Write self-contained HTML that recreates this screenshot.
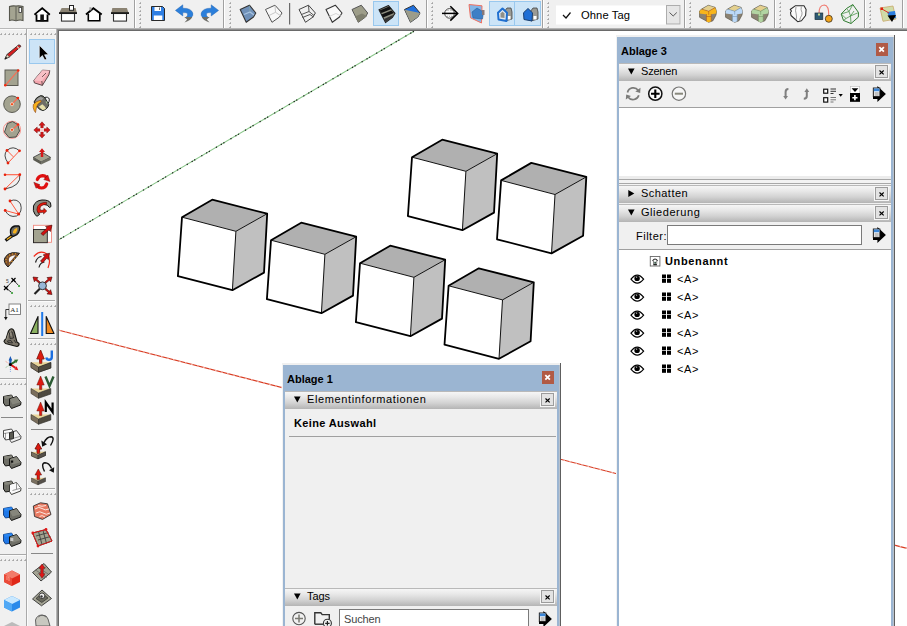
<!DOCTYPE html>
<html><head><meta charset="utf-8">
<style>
*{margin:0;padding:0;box-sizing:border-box}
html,body{width:907px;height:626px;overflow:hidden;background:#f0f0f0;font-family:"Liberation Sans",sans-serif;font-size:11px;color:#000}
.a{position:absolute}
svg{position:absolute;overflow:visible}
.panel{position:absolute;background:#9db5d1;border-left:1px solid #e6e6e6;border-top:1px solid #e6e6e6;}
.ttl{position:absolute;font-weight:bold;font-size:11px;white-space:nowrap}
.hdr{position:absolute;height:17px;background:linear-gradient(#f5f5f5,#e3e3e3 40%,#bcbcbc);border-top:1px solid #c8c8c8}
.hdr .t{position:absolute;left:22px;top:2px;font-size:11px;white-space:nowrap;color:#1a1a1a}
.hx{position:absolute;width:14px;height:14px;border:1px solid #adadad;background:#e8e8e8}
.cx{position:absolute;width:12px;height:13px;background:#b4574a}
.body{position:absolute;background:#f0f0f0}
.tx{white-space:nowrap;line-height:13px}
</style></head><body>

<!-- TOP TOOLBAR -->
<svg width="907" height="28" style="left:0;top:0">
  <defs>
    <g id="grip"><rect x="0" y="0" width="2" height="2" fill="#b8b8b8"/><rect x="0" y="0" width="1" height="1" fill="#f4f4f4"/><rect x="1" y="1" width="1" height="1" fill="#a4a4a4"/></g>
    <g id="gripcol">
      <use href="#grip" y="2"/><use href="#grip" y="6"/><use href="#grip" y="10"/><use href="#grip" y="14"/><use href="#grip" y="18"/><use href="#grip" y="22"/><use href="#grip" y="26"/>
    </g>
    <g id="sep"><rect x="0" y="0" width="1" height="28" fill="#a0a0a0"/><rect x="1" y="0" width="1" height="28" fill="#fff"/></g>
  </defs>
  <use href="#sep" x="134"/><use href="#gripcol" x="139"/>
  <use href="#sep" x="223"/><use href="#gripcol" x="229"/>
  <use href="#sep" x="426"/><use href="#gripcol" x="431"/>
  <use href="#sep" x="542"/><use href="#gripcol" x="547"/>
  <use href="#sep" x="684"/><use href="#gripcol" x="689"/>
  <use href="#sep" x="774"/><use href="#gripcol" x="779"/>
  <use href="#sep" x="864"/><use href="#gripcol" x="869"/>
  <use href="#sep" x="902"/>
  <rect x="289" y="3" width="1.2" height="21.5" fill="#6a6a6a"/>

  <!-- book -->
  <path d="M9.5,6.5 Q12,5.5 16,6 Q20,5.5 23,6.5 L23,20.5 Q20,19.5 16,20.8 Q12,19.5 9.5,20.5 Z" fill="#a4a491" stroke="#55554c" stroke-width="1.1"/>
  <line x1="16" y1="6" x2="16" y2="20.8" stroke="#66665c" stroke-width="1.1"/>
  <rect x="19" y="7.5" width="2.5" height="5" fill="#fff" stroke="#333" stroke-width="0.8"/>
  <!-- home -->
  <path d="M36.5,14.5 V20.8 H47.5 V14.5" fill="#fff" stroke="#000" stroke-width="1.8"/>
  <path d="M34.5,14.8 L42.2,8.3 L49.8,14.8" fill="none" stroke="#000" stroke-width="2"/>
  <path d="M36.5,14 L42.2,9.5 L47.5,14 Z" fill="#fff"/>
  <rect x="40.3" y="14.5" width="3.6" height="6.8" fill="#111"/>
  <!-- house chimney -->
  <rect x="61.5" y="13.5" width="13" height="7.6" fill="#fff" stroke="#333" stroke-width="1.1"/>
  <path d="M61.6,8 H75.6 L76.9,13 H59.2 Z" fill="#8b8373"/>
  <rect x="59" y="12.2" width="18" height="1.8" fill="#1a1a1a"/>
  <rect x="69.5" y="5.5" width="4" height="4.8" fill="#fff" stroke="#222" stroke-width="1"/>
  <!-- house outline -->
  <path d="M88.3,14 V20.8 H99.8 V14" fill="#fff" stroke="#000" stroke-width="1.6"/>
  <path d="M88.5,14 L93.4,9.5 L99.5,14 Z" fill="#fff"/>
  <path d="M86,14.5 L93.4,8.3 L101.7,14.5" fill="none" stroke="#000" stroke-width="1.9"/>
  <rect x="89.4" y="7.2" width="2" height="3.2" fill="#aaa"/>
  <!-- house gray roof -->
  <rect x="113.5" y="13.5" width="13" height="7.6" fill="#fff" stroke="#333" stroke-width="1.1"/>
  <path d="M112.3,8 H126.9 L128.6,13 H111.3 Z" fill="#8b8373"/>
  <rect x="111" y="12.2" width="18" height="1.8" fill="#1a1a1a"/>
  <!-- save -->
  <path d="M151.5,6.5 H162.5 L164.5,8.5 V20.5 H151.5 Z" fill="#2f7fe3" stroke="#2a2a2a" stroke-width="1"/>
  <rect x="154.5" y="7" width="6.5" height="4" fill="#fff"/>
  <rect x="159" y="7.5" width="1" height="2.5" fill="#777"/>
  <rect x="153.8" y="15.5" width="8.5" height="4.5" fill="#fff"/>
  <!-- undo -->
  <path d="M175.4,10.4 L182.8,4.8 L182.8,8.2 Q191,8 192.8,13 Q193.4,16.2 191,17.6 L186,17.4 Q188.4,15.2 187.5,13.6 Q186.5,12.3 182.8,12.6 L182.8,16 Z" fill="#2b7fdb" stroke="#1a5aa8" stroke-width="0.4"/>
  <path d="M184.3,16.9 L192.2,17 Q191.2,20.2 184.5,22.4 L187.2,19.6 Z" fill="#6e6e68"/>
  <!-- redo -->
  <g transform="translate(394,0) scale(-1,1)">
  <path d="M175.4,10.4 L182.8,4.8 L182.8,8.2 Q191,8 192.8,13 Q193.4,16.2 191,17.6 L186,17.4 Q188.4,15.2 187.5,13.6 Q186.5,12.3 182.8,12.6 L182.8,16 Z" fill="#2b7fdb" stroke="#1a5aa8" stroke-width="0.4"/>
  <path d="M184.3,16.9 L192.2,17 Q191.2,20.2 184.5,22.4 L187.2,19.6 Z" fill="#6e6e68"/>
  </g>
  <!-- xray cube -->
  <path d="M240.2,9.5 L249.4,5.2 L255.8,13 L253.5,17 L246.2,22.3 Z" fill="#6f90b8" stroke="#333" stroke-width="1.1" stroke-linejoin="round"/>
  <path d="M244,14.5 L250,12 L254,15" fill="none" stroke="#a8c4e2" stroke-width="1.2"/>
  <line x1="249.4" y1="5.5" x2="250" y2="12" stroke="#8aa" stroke-width="0.6"/>
  <!-- back edges -->
  <path d="M265.5,9.5 L275,5.2 L282,13 L279.5,17 L272,22.3 Z" fill="#f8f8f8" stroke="#555" stroke-width="1" stroke-linejoin="round"/>
  <path d="M269,15.5 L275.5,12.3 L281,16 M275,5.5 L275.5,12.3" fill="none" stroke="#bbb" stroke-width="0.8"/>
  <!-- wireframe -->
  <path d="M299,9.5 L308.5,5.2 L315.4,13 L313,17 L305.5,22.3 Z" fill="none" stroke="#444" stroke-width="1" stroke-linejoin="round"/>
  <path d="M301.5,14.5 L309,11.5 L314,15.5 M308.5,5.5 L309,11.5 M302.5,17.5 L310,14.5 L313.5,17" fill="none" stroke="#444" stroke-width="0.9"/>
  <!-- hidden line -->
  <path d="M326,9.5 L335.3,5.2 L342,13 L339.5,17 L332.3,22.3 Z" fill="#fafafa" stroke="#333" stroke-width="1.1" stroke-linejoin="round"/>
  <path d="M329,16.5 L336,13.5 L341,16" fill="none" stroke="#ccc" stroke-width="0.8"/>
  <!-- shaded -->
  <path d="M352,9.5 L361.3,5.2 L367.7,13 L365.5,17 L358.3,22.3 Z" fill="#9d9d89" stroke="#555" stroke-width="1" stroke-linejoin="round"/>
  <path d="M355,16.5 L362,13.5 L367,16 L358.3,22.3 Z" fill="#7f7f6e"/>
  <!-- selected textured -->
  <rect x="373.5" y="1.5" width="25" height="24" fill="#cce4f7" stroke="#99c8ee" stroke-width="1"/>
  <path d="M379,9.8 L388.5,5.5 L395,13.3 L392.5,17.3 L385.5,22.6 Z" fill="#8e8e80" stroke="#222" stroke-width="1.1" stroke-linejoin="round"/>
  <path d="M379.5,10.5 L389,6.5 L391.5,9 L381.5,13 Z" fill="#111"/>
  <path d="M381.5,14.5 L391.5,10.5 L394,13 L383,17.5 Z" fill="#111"/>
  <path d="M384,19 L393,15 L392.5,17.3 L385.5,22 Z" fill="#333"/>
  <!-- monochrome -->
  <path d="M404.5,9.5 L413.5,5.2 L420,13 L417.8,17 L410.5,22.3 Z" fill="#1f6fdc" stroke="#333" stroke-width="1" stroke-linejoin="round"/>
  <path d="M404.8,9.8 L420,13 L417.8,17 L410.5,22.3 Z" fill="#9c9c8a"/>
  <!-- axes -->
  <circle cx="449.5" cy="13.4" r="4.8" fill="#fbfbfb" stroke="#333" stroke-width="0.9"/>
  <path d="M447.5,10.5 h1 M450.5,10.5 h1 M447,16.3 h1 M449,16.3 h1 M451,16.3 h1" stroke="#888" stroke-width="0.8"/>
  <line x1="442" y1="13.4" x2="457" y2="13.4" stroke="#000" stroke-width="1.5"/>
  <path d="M450.3,6.2 L457.7,13.4 L450.3,20.6" fill="none" stroke="#000" stroke-width="1.5"/>
  <!-- section plane -->
  <path d="M469,4.5 L482,5.8 L481.5,23 L470.5,17.8 Z" fill="#82b6e8" stroke="#f07060" stroke-width="1"/>
  <path d="M472,12 L477,8 L483.5,12 L482.5,19 L473,18 Z" fill="#3d7fc6" stroke="#2a5e99" stroke-width="0.6"/>
  <rect x="482" y="10" width="2.5" height="5" fill="#877"/>
  <!-- selected house btns -->
  <rect x="489.5" y="1.5" width="25" height="24" fill="#cce4f7" stroke="#99c8ee" stroke-width="1"/>
  <rect x="514.5" y="1.5" width="26" height="24" fill="#cce4f7" stroke="#99c8ee" stroke-width="1"/>
  <path d="M504,12 L507,8 L511,8 L512,12 L512,19 L505,21 Z" fill="#9a9a94" stroke="#444" stroke-width="0.8"/>
  <rect x="507.5" y="16" width="3" height="3.5" fill="#fff"/>
  <path d="M498,12.8 L502.5,8.5 L507,12.8 L506.5,21 L498.5,19.5 Z" fill="#dfe9f3" stroke="#1f6fd0" stroke-width="2" stroke-linejoin="round"/>
  <path d="M500.5,13.5 L502.5,11.5 L504.5,13.5 L504.5,18 L500.5,17.5 Z" fill="#8f8f88"/>
  <path d="M530,12 L533,8 L537,8 L538,12 L538,19 L531,21 Z" fill="#9a9a94" stroke="#444" stroke-width="0.8"/>
  <rect x="533.5" y="16" width="3" height="3.5" fill="#fff"/>
  <path d="M523.5,12.8 L528,8.5 L532.5,12.8 L532,21 L524,19.5 Z" fill="#1f6fd6" stroke="#1a3f70" stroke-width="1" stroke-linejoin="round"/>
  <!-- dropdown -->
  <rect x="556" y="5.5" width="125" height="19" fill="#fff"/>
  <path d="M563,15 L566,18 L570.5,12.5" fill="none" stroke="#111" stroke-width="1.25"/>
  <text x="581" y="18.6" font-family="Liberation Sans" font-size="11.2" fill="#000" letter-spacing="0.1">Ohne Tag</text>
  <rect x="666.5" y="5.5" width="13.5" height="18.5" fill="#e6e6e6" stroke="#adadad" stroke-width="1"/>
  <path d="M669.5,12.5 L673.2,16 L676.8,12.5" fill="none" stroke="#555" stroke-width="1"/>
  <!-- solids -->
<g transform="translate(0,0)">
    <path d="M699.5,11 L701.8,8.9 L708.3,5.3 L715.2,7.4 L716.5,11.6 L716,15 L712.9,20.8 L708.7,22.3 L699.6,17.3 Z" fill="#8b8272" stroke="#5a5448" stroke-width="0.7" stroke-linejoin="round"/>
    <path d="M702,9.2 L708.3,5.5 L715,7.6 L708.7,11.2 Z" fill="#e4d08e"/>
    <path d="M699.6,10.8 L702,9.2 L708.7,11.2 L708.7,14.8 L699.6,13.4 Z" fill="#f8b51a"/>
    <path d="M708.7,11.2 L715,7.6 L716.5,11.3 L716.2,13.6 L708.7,14.8 Z" fill="#f8b51a"/>
    <path d="M706.4,12 L711.2,12 L711.2,21.2 L708.7,22.2 L706.4,21.4 Z" fill="#f8b51a"/>
    <path d="M702,9.2 L708.7,11.2 L715,7.6 M708.7,11.2 V14.8 M706.4,14 V21.4 M711.2,14 V21.2 M706.4,16.5 H711.2" fill="none" stroke="#a04a20" stroke-width="0.5"/>
  </g>
<g transform="translate(26,0)">
    <path d="M699.5,11 L701.8,8.9 L708.3,5.3 L715.2,7.4 L716.5,11.6 L716,15 L712.9,20.8 L708.7,22.3 L699.6,17.3 Z" fill="#8b8272" stroke="#5a5448" stroke-width="0.7" stroke-linejoin="round"/>
    <path d="M702,9.2 L708.3,5.5 L715,7.6 L708.7,11.2 Z" fill="#e4d08e"/>
    <path d="M699.6,10.8 L702,9.2 L708.7,11.2 L708.7,14.8 L699.6,13.4 Z" fill="#bcd9f7"/>
    <path d="M708.7,11.2 L715,7.6 L716.5,11.3 L716.2,13.6 L708.7,14.8 Z" fill="#bcd9f7"/>
    <path d="M706.4,12 L711.2,12 L711.2,21.2 L708.7,22.2 L706.4,21.4 Z" fill="#bcd9f7"/>
    <path d="M702,9.2 L708.7,11.2 L715,7.6 M708.7,11.2 V14.8 M706.4,14 V21.4 M711.2,14 V21.2 M706.4,16.5 H711.2" fill="none" stroke="#6a8aa8" stroke-width="0.5"/>
  </g>
<g transform="translate(52,0)">
    <path d="M699.5,11 L701.8,8.9 L708.3,5.3 L715.2,7.4 L716.5,11.6 L716,15 L712.9,20.8 L708.7,22.3 L699.6,17.3 Z" fill="#8b8272" stroke="#5a5448" stroke-width="0.7" stroke-linejoin="round"/>
    <path d="M702,9.2 L708.3,5.5 L715,7.6 L708.7,11.2 Z" fill="#e4d08e"/>
    <path d="M699.6,10.8 L702,9.2 L708.7,11.2 L708.7,14.8 L699.6,13.4 Z" fill="#b2d4a2"/>
    <path d="M708.7,11.2 L715,7.6 L716.5,11.3 L716.2,13.6 L708.7,14.8 Z" fill="#b2d4a2"/>
    <path d="M706.4,12 L711.2,12 L711.2,21.2 L708.7,22.2 L706.4,21.4 Z" fill="#b2d4a2"/>
    <path d="M702,9.2 L708.7,11.2 L715,7.6 M708.7,11.2 V14.8 M706.4,14 V21.4 M711.2,14 V21.2 M706.4,16.5 H711.2" fill="none" stroke="#6a8a5a" stroke-width="0.5"/>
  </g>
<!-- sandbox outline -->
  <path d="M790.2,9.5 L795.2,5.8 L804,5.7 L806.1,9.5 L805.6,15.5 L801.5,20.8 L797.7,21.7 L791,15.5 L790.5,12.5 L791.5,11 Z" fill="#fbfbfb" stroke="#2a2a2a" stroke-width="1.05" stroke-linejoin="round"/>
  <path d="M796,7 Q795,11 796.2,14 Q797,17 796,20 M801.3,6.5 Q800.5,10 802,12.5 Q802.5,15 800.5,17.5 Q799.5,19 800,21" fill="none" stroke="#777" stroke-width="0.7"/>
  <!-- red arc -->
  <path d="M819,14 Q818.8,5 824.3,5 Q829,5.2 828.8,16" fill="none" stroke="#f07a70" stroke-width="1.1"/>
  <rect x="815" y="13" width="7.8" height="6.6" fill="#2e5a74" stroke="#1a2e3a" stroke-width="0.7"/>
  <rect x="818" y="13.5" width="2" height="2" fill="#c8d890"/>
  <circle cx="828.8" cy="18.8" r="3.5" fill="#f3a51c" stroke="#3a3020" stroke-width="0.8"/>
  <!-- green mesh -->
  <path d="M841.2,14 L846.5,8.5 L852.8,4.6 L858.5,12.5 L858.3,17.2 L851,23.5 L843.5,20.5 Z" fill="none" stroke="#2f7a2f" stroke-width="1"/>
  <path d="M846.5,8.5 L849,11.5 L852.8,4.6 M849,11.5 L841.2,14 M849,11.5 L850.5,16 L858.5,12.5 M850.5,16 L846,18.5 L843.5,20.5 M846,18.5 L841.2,14 M850.5,16 L851,23.5 M854,11 L850.5,16" fill="none" stroke="#3f8f3f" stroke-width="0.75"/>
  <!-- map -->
  <path d="M880,8 L893,6 L896,19 L883,21.3 Z" fill="#cfdca8" stroke="#c9a86a" stroke-width="0.8"/>
  <path d="M887,12 L895,11 L896,18 L890,19 Z" fill="#2a7ee0"/>
  <line x1="882" y1="9" x2="889" y2="13" stroke="#e03020" stroke-width="1"/>
  <rect x="880.5" y="7.5" width="2.5" height="2.5" fill="#e02010"/>
  <path d="M887.5,15.5 L896,15 L892,22 Z" fill="#000"/>
</svg>


<!-- LEFT TOOLBAR -->
<svg width="56" height="598" style="left:0;top:28px">
 <g transform="translate(0,-28)">
  <!-- column separators -->
  <rect x="0" y="29" width="56" height="1" fill="#fbfbfb"/>
  <rect x="26" y="29" width="1" height="597" fill="#a9a9a9"/>
  <rect x="27" y="29" width="1" height="597" fill="#fbfbfb"/>
  <rect x="55" y="29" width="1" height="597" fill="#f6f6f6"/>
  <!-- grips -->
  <defs><g id="griprow"><use href="#grip" x="0"/><use href="#grip" x="4"/><use href="#grip" x="8"/><use href="#grip" x="12"/><use href="#grip" x="16"/><use href="#grip" x="20"/><use href="#grip" x="24"/></g></defs>
  <use href="#griprow" y="33"/><use href="#griprow" x="30" y="33"/>
  <use href="#griprow" y="383"/><use href="#griprow" y="559"/>
  <use href="#griprow" x="30" y="305"/><use href="#griprow" x="30" y="343"/><use href="#griprow" x="30" y="493"/>
  <!-- horizontal box separators -->
  <rect x="0" y="378" width="26" height="1" fill="#a9a9a9"/><rect x="0" y="379" width="26" height="1" fill="#fbfbfb"/>
  <rect x="0" y="554" width="26" height="1" fill="#a9a9a9"/><rect x="0" y="555" width="26" height="1" fill="#fbfbfb"/>
  <rect x="28" y="300" width="27" height="1" fill="#a9a9a9"/><rect x="28" y="301" width="27" height="1" fill="#fbfbfb"/>
  <rect x="28" y="338" width="27" height="1" fill="#a9a9a9"/><rect x="28" y="339" width="27" height="1" fill="#fbfbfb"/>
  <rect x="28" y="488" width="27" height="1" fill="#a9a9a9"/><rect x="28" y="489" width="27" height="1" fill="#fbfbfb"/>
  <rect x="1" y="417" width="22" height="1" fill="#888"/>
  <rect x="31" y="429" width="22" height="1" fill="#888"/>
  <rect x="31" y="553" width="22" height="1" fill="#888"/>

  <!-- selected select btn -->
  <rect x="29.5" y="39.5" width="25" height="24" fill="#cce4f7" stroke="#99c8ee" stroke-width="1"/>
  <path d="M39.3,45.3 L39.3,58.5 L42.3,55.5 L44.8,60 L46.8,59 L44.5,54.8 L48.5,54.6 Z" fill="#000" stroke="#fff" stroke-width="0.6"/>
  <!-- pencil -->
  <path d="M5,59 L7,54.5 L18.5,45 Q20.5,44.5 20.8,46.5 L9.5,56.8 Z" fill="#d81e1e" stroke="#3a2a2a" stroke-width="0.9" stroke-linejoin="round"/>
  <path d="M5,59 L7,54.5 L9.5,56.8 Z" fill="#e8dcc0" stroke="#333" stroke-width="0.6"/>
  <path d="M4.3,59.8 L6,56.8 L7.2,58 Z" fill="#111"/>
  <path d="M17,46.5 L19.5,48.8" stroke="#e6c8b8" stroke-width="1.2"/>
  <!-- rectangle -->
  <rect x="5" y="70" width="13" height="15.5" fill="#a3a390" stroke="#5a5a52" stroke-width="1"/>
  <line x1="5.3" y1="85.3" x2="18.2" y2="70.5" stroke="#ff6a50" stroke-width="1.1"/>
  <circle cx="5.3" cy="85.3" r="1.3" fill="#f02a10"/><circle cx="18.2" cy="70.5" r="1.3" fill="#f02a10"/>
  <!-- circle -->
  <circle cx="12" cy="104.2" r="8.3" fill="#a3a390" stroke="#5a5a52" stroke-width="1"/>
  <line x1="12" y1="104.2" x2="17.9" y2="98" stroke="#ff6a50" stroke-width="1.1"/>
  <circle cx="12" cy="104.2" r="1.6" fill="#f0501a" stroke="#fff" stroke-width="0.6"/><circle cx="17.9" cy="98" r="1.3" fill="#f02a10"/>
  <!-- polygon -->
  <circle cx="12" cy="129.8" r="8.6" fill="none" stroke="#f58a80" stroke-width="0.9"/>
  <path d="M7.5,123.5 L12.5,121.6 L17.8,124.5 L19.5,131 L16,137 L9,137.5 L4.5,132 Z" fill="#a3a390" stroke="#4a4a44" stroke-width="1"/>
  <line x1="12" y1="129.8" x2="18" y2="124.5" stroke="#ff6a50" stroke-width="1.1"/>
  <circle cx="12" cy="129.8" r="1.6" fill="#f0501a" stroke="#fff" stroke-width="0.6"/><circle cx="18" cy="124.5" r="1.3" fill="#f02a10"/>
  <!-- arc 1 -->
  <path d="M8,163 Q2.5,155 7,150.4 Q13,145 19.5,150.8" fill="none" stroke="#333" stroke-width="0.9"/>
  <line x1="7" y1="150.4" x2="13.3" y2="156.8" stroke="#ff5a40" stroke-width="1"/>
  <line x1="8" y1="163" x2="19.5" y2="150.8" stroke="#ff5a40" stroke-width="1"/>
  <circle cx="7" cy="150.4" r="1.4" fill="#e8200a"/><circle cx="19.5" cy="150.8" r="1.4" fill="#e8200a"/><circle cx="8" cy="163" r="1.4" fill="#e8200a"/>
  <!-- arc 2 -->
  <path d="M19.8,174.7 Q21.5,186 5,189" fill="none" stroke="#333" stroke-width="0.9"/>
  <line x1="5" y1="174.7" x2="19.8" y2="174.7" stroke="#ff5a40" stroke-width="1.1"/>
  <line x1="19.8" y1="174.7" x2="5" y2="189" stroke="#ff5a40" stroke-width="1"/>
  <circle cx="5" cy="174.7" r="1.3" fill="#e8200a"/><circle cx="19.8" cy="174.7" r="1.4" fill="#e8200a"/><circle cx="5" cy="189" r="1.4" fill="#e8200a"/>
  <!-- arc 3 -->
  <path d="M10,201 Q17,198 20.5,204 Q23,212 16.5,216 Q9,218 5.2,210.5" fill="none" stroke="#333" stroke-width="0.9"/>
  <line x1="10" y1="201" x2="18.7" y2="214.1" stroke="#ff5a40" stroke-width="1"/>
  <line x1="5.2" y1="210.5" x2="18.7" y2="214.1" stroke="#ff5a40" stroke-width="1"/>
  <circle cx="10" cy="201" r="1.4" fill="#e8200a"/><circle cx="5.2" cy="210.5" r="1.4" fill="#e8200a"/><circle cx="18.7" cy="214.1" r="1.5" fill="#e8200a"/>
  <!-- tape -->
  <path d="M5.5,240.5 L12.2,235.6" stroke="#111" stroke-width="3.2"/>
  <path d="M6.8,239.5 L11.5,236.2" stroke="#f6b21c" stroke-width="1.4"/>
  <path d="M10.5,230 Q11.5,226.8 15,226 L18.5,225.8 Q20,226.5 19.6,229.6 Q19,233 16.8,234.6 L13.3,236.4 Q11,236 10.5,233 Z" fill="#6a6a64" stroke="#111" stroke-width="1.3" stroke-linejoin="round"/>
  <path d="M13,231.5 Q14,228.5 17.2,227.8 Q18,230.5 16,233 Q14.5,234 13,233 Z" fill="#f6b21c"/>
  <!-- protractor -->
  <path d="M8,267 Q3,262.5 4.8,258 Q7,253.5 12,252.8 Q16,252.3 19.5,253.3 Z" fill="#7a5030" stroke="#222" stroke-width="1" stroke-linejoin="round"/>
  <path d="M9.5,262.5 Q8,259 10,257 Q12.5,255.2 15.5,255.3 Z" fill="#f8f8f8"/>
  <path d="M5.8,262 h1 M5.5,259.5 h1 M6.8,257 h1 M9,255 h1 M12,254 h1 M15,253.8 h1 M9,264 h1 M11.5,261.5 h1 M14,259 h1 M16.5,256.5 h1" stroke="#f6a820" stroke-width="1"/>
  <!-- dimension -->
  <line x1="6" y1="288" x2="13.5" y2="280" stroke="#222" stroke-width="0.9"/>
  <line x1="13.5" y1="280" x2="19" y2="286" stroke="#222" stroke-width="0.9"/>
  <line x1="6" y1="288" x2="12" y2="292.8" stroke="#222" stroke-width="0.9"/>
  <path d="M11.5,278 L15.5,282 M15.5,278 L11.5,282 M4,286 L8,290 M8,286 L4,290" stroke="#000" stroke-width="1.2"/>
  <rect x="18" y="285" width="2" height="2" fill="#5a5"/><rect x="11" y="292" width="2" height="2" fill="#5a5"/>
  <text x="6" y="283" font-size="5" font-family="Liberation Sans" fill="#444">5</text>
  <!-- text tool -->
  <rect x="9" y="304" width="11.5" height="10.5" fill="#fff" stroke="#777" stroke-width="0.9"/>
  <text x="10.3" y="312.2" font-size="7" font-family="Liberation Serif" fill="#222">A1</text>
  <path d="M9,309.5 H5.8 V318" fill="none" stroke="#222" stroke-width="0.9"/>
  <path d="M4,317 L5.8,320.3 L7.6,317 Z" fill="#111"/>
  <!-- 3d text -->
  <path d="M4,341.5 Q4.5,339.5 6,339 L8.5,331 Q10,328.5 11.5,328.8 Q13.5,329 14.3,332 L17,342 L19,343.5 Q19.5,346 17,346.5 L13,345.5 L5.5,343.5 Z" fill="#7a7468" stroke="#141410" stroke-width="1.1" stroke-linejoin="round"/>
  <path d="M9.5,333 Q11,330.5 12.5,332.5 L13.5,338 L10,338.5 Z M7.5,341 L11,340.5 L12.5,343 L8,342.5 Z M14,340 L16,343" fill="none" stroke="#222" stroke-width="0.8"/>
  <path d="M10.5,331 L11,336 M6.5,340 L8.5,333" stroke="#c8c2b0" stroke-width="0.5"/>
  <!-- axes -->
  <line x1="10.4" y1="364.5" x2="5" y2="361" stroke="#f09080" stroke-width="0.9" stroke-dasharray="1.2 1"/>
  <line x1="10.4" y1="364.5" x2="5" y2="368" stroke="#80b880" stroke-width="0.9" stroke-dasharray="1.2 1"/>
  <line x1="10.4" y1="364.5" x2="10.4" y2="371.8" stroke="#6090e0" stroke-width="0.9" stroke-dasharray="1.2 1"/>
  <line x1="10.4" y1="364.5" x2="10.4" y2="359.5" stroke="#1a5ab8" stroke-width="2.2"/>
  <path d="M8.6,360.5 L10.4,356 L12.2,360.5 Z" fill="#1a5ab8"/>
  <line x1="10.4" y1="364.5" x2="15.5" y2="361.3" stroke="#2a6a2a" stroke-width="2"/>
  <path d="M14,359.8 L18.3,359.5 L16.3,363 Z" fill="#2a6a2a"/>
  <line x1="10.4" y1="364.5" x2="15.5" y2="367.8" stroke="#e01818" stroke-width="2"/>
  <path d="M14.5,369.5 L18.3,370.3 L16.6,366.3 Z" fill="#e01818"/>
  <circle cx="10.4" cy="364.5" r="1.5" fill="#000"/>
<!-- solid tools col1 -->
<g transform="translate(0,0)">
    <path d="M3.5,396.5 L11.5,395 L13.5,398 L13.5,404.5 L5.5,406 L3.5,403 Z" fill="#6e6e66" stroke="#141412" stroke-width="1" stroke-linejoin="round"/>
    <path d="M3.8,396.6 L11.5,395.2 L13.3,397.8 L5.5,399 Z" fill="#86867c"/>
    <path d="M9.5,398.8 L16.5,396.6 L21,402.5 L20.6,405 L11.5,408.5 L9.5,405.5 Z" fill="#6e6e66" stroke="#141412" stroke-width="1" stroke-linejoin="round"/>
    <path d="M9.8,399 L16.5,396.9 L20.5,402.3 L12.5,404.5 Z" fill="#86867c"/>
    
  </g>
<g transform="translate(0,34)">
    <path d="M3.5,396.5 L11.5,395 L13.5,398 L13.5,404.5 L5.5,406 L3.5,403 Z" fill="#fafafa" stroke="#222" stroke-width="0.8" stroke-linejoin="round"/>
    <path d="M9.5,398.8 L16.5,396.6 L21,402.5 L20.6,405 L11.5,408.5 L9.5,405.5 Z" fill="none" stroke="#222" stroke-width="0.8" stroke-linejoin="round"/>
    <path d="M9.5,398.8 L13.5,397.8 L13.5,404.5 L10.5,405.3 L9.5,404 Z" fill="#5a5a52" stroke="#111" stroke-width="0.6"/>
    <path d="M3.8,399.5 L13.3,398 M5.5,399 V406 M12.5,404.5 L20.5,402.3" stroke="#444" stroke-width="0.5" fill="none"/>
  </g>
<g transform="translate(0,60)">
    <path d="M3.5,396.5 L11.5,395 L13.5,398 L13.5,404.5 L5.5,406 L3.5,403 Z" fill="#6e6e66" stroke="#141412" stroke-width="1" stroke-linejoin="round"/>
    <path d="M3.8,396.6 L11.5,395.2 L13.3,397.8 L5.5,399 Z" fill="#86867c"/>
    <path d="M9.5,398.8 L16.5,396.6 L21,402.5 L20.6,405 L11.5,408.5 L9.5,405.5 Z" fill="#6e6e66" stroke="#141412" stroke-width="1" stroke-linejoin="round"/>
    <path d="M9.8,399 L16.5,396.9 L20.5,402.3 L12.5,404.5 Z" fill="#86867c"/>
    <rect x="11" y="400.5" width="2.2" height="2.2" fill="#111"/>
  </g>
<g transform="translate(0,86)">
    <path d="M3.5,396.5 L11.5,395 L13.5,398 L13.5,404.5 L5.5,406 L3.5,403 Z" fill="#6e6e66" stroke="#141412" stroke-width="1" stroke-linejoin="round"/>
    <path d="M3.8,396.6 L11.5,395.2 L13.3,397.8 L5.5,399 Z" fill="#86867c"/>
    <path d="M9.5,398.8 L16.5,396.6 L21,402.5 L20.6,405 L11.5,408.5 L9.5,405.5 Z" fill="#fafafa" stroke="#2a2a26" stroke-width="0.9" stroke-linejoin="round"/>
    <path d="M9.8,399 L16.5,396.9 L20.5,402.3 L12.5,404.5 Z" fill="#fafafa"/>
    <path d="M12.5,404.5 L20.5,402.3 M16.5,397 L16.5,403" stroke="#333" stroke-width="0.5"/>
  </g>
<g transform="translate(0,112)">
    <path d="M3.5,396.5 L11.5,395 L13.5,398 L13.5,404.5 L5.5,406 L3.5,403 Z" fill="#1f78e8" stroke="#0f3c80" stroke-width="0.9" stroke-linejoin="round"/>
    <path d="M3.8,396.6 L11.5,395.2 L13.3,397.8 L5.5,399 Z" fill="#2a86f0"/>
    <path d="M9.5,398.8 L16.5,396.6 L21,402.5 L20.6,405 L11.5,408.5 L9.5,405.5 Z" fill="#6e6e66" stroke="#141412" stroke-width="1" stroke-linejoin="round"/>
    <path d="M9.8,399 L16.5,396.9 L20.5,402.3 L12.5,404.5 Z" fill="#86867c"/>
    
  </g>
<g transform="translate(0,138)">
    <path d="M3.5,396.5 L11.5,395 L13.5,398 L13.5,404.5 L5.5,406 L3.5,403 Z" fill="#1f78e8" stroke="#0f3c80" stroke-width="0.9" stroke-linejoin="round"/>
    <path d="M3.8,396.6 L11.5,395.2 L13.3,397.8 L5.5,399 Z" fill="#2a86f0"/>
    <path d="M9.5,398.8 L16.5,396.6 L21,402.5 L20.6,405 L11.5,408.5 L9.5,405.5 Z" fill="#6e6e66" stroke="#141412" stroke-width="1" stroke-linejoin="round"/>
    <path d="M9.8,399 L16.5,396.9 L20.5,402.3 L12.5,404.5 Z" fill="#86867c"/>
    <rect x="10.3" y="400" width="3" height="3" fill="#c8c8c8"/>
  </g>
<!-- red cube -->
  <path d="M12,570.5 L20,574.5 L20,582 L12,586 L4,582 L4,574.5 Z" fill="#e02818"/>
  <path d="M12,570.5 L20,574.5 L12,578.5 L4,574.5 Z" fill="#f27a68"/>
  <path d="M4,574.5 L12,578.5 L12,586 L4,582 Z" fill="#ea4a38"/>
  <path d="M6,577 h3 v4 M6,579 h2" stroke="#ffb0a0" stroke-width="0.8" fill="none"/>
  <!-- blue cube -->
  <path d="M12,596 L20,600 L20,607.5 L12,611.6 L4,607.5 L4,600 Z" fill="#2a8aea"/>
  <path d="M12,596 L20,600 L12,604 L4,600 Z" fill="#c8e8ff"/>
  <path d="M4,600 L12,604 L12,611.6 L4,607.5 Z" fill="#50a8f5"/>
  <path d="M12,622 L20,626 L4,626 Z" fill="#bbb"/>

  <!-- eraser -->
  <path d="M33.8,80.4 L42.4,70.2 L49.8,70.6 L48.9,74.9 L42.4,85.4 L34.4,82.9 Z" fill="#f4a6ae" stroke="#4a3a3a" stroke-width="0.9" stroke-linejoin="round"/>
  <path d="M33.8,80.4 L42.4,70.2 L49.8,70.6 L41.8,81 Z" fill="#f8c0c6"/>
  <line x1="41.8" y1="81" x2="42.4" y2="85.4" stroke="#4a3a3a" stroke-width="0.8"/>
  <line x1="42" y1="77" x2="46" y2="73" stroke="#7a5a5a" stroke-width="1"/>
  <!-- paint bucket -->
  <path d="M34,102 Q36,97 40.7,95.6 Q43.5,95.5 45,98 L48.7,104.5 Q48,109 43,110.5 Q39,110 37.5,107 Z" fill="#6e6e66" stroke="#1e221e" stroke-width="1" stroke-linejoin="round"/>
  <path d="M35.5,101.5 Q37.5,97.5 41,96.8 L43.5,98.5 Q41,101.5 37,102.5 Z" fill="#9e9e9c"/>
  <path d="M44.2,97.6 Q48.5,96.3 49.3,99.2 Q49.5,101.5 48.2,103.2" fill="none" stroke="#222" stroke-width="1"/>
  <path d="M38.8,106.8 L42.3,104.3 Q45,106 46,108.5 Q44,110 42.5,110 Z" fill="#e6e0a8"/>
  <path d="M46,101.5 L47.3,103.5" stroke="#a8c890" stroke-width="1.2"/>
  <path d="M33.3,104.5 Q36,101 40.7,100.2 L41.2,101.8 Q37.5,103.5 36.5,107 Q36,110 35.5,112.6 Q34,111 33.2,107.5 Z" fill="#f6b21c" stroke="#8a3a10" stroke-width="0.6"/>
  <!-- move -->
  <path d="M42,121.8 L45,125.2 L43.2,125.2 L43.2,128.8 L46.8,128.8 L46.8,127 L50.1,130 L46.8,133 L46.8,131.2 L43.2,131.2 L43.2,134.8 L45,134.8 L42,138.1 L39,134.8 L40.8,134.8 L40.8,131.2 L37.2,131.2 L37.2,133 L33.8,130 L37.2,127 L37.2,128.8 L40.8,128.8 L40.8,125.2 L39,125.2 Z" fill="#d41818" stroke="#7a1010" stroke-width="0.5"/>
  <rect x="40" y="128" width="4" height="4" fill="#fff" opacity="0.8"/>
  <!-- push pull -->
  <path d="M33.2,157.4 L42.5,152.5 L50.6,157.4 L41.1,162 Z" fill="#a3a390" stroke="#333" stroke-width="0.8"/>
  <path d="M33.2,157.4 L41.1,162 L41.1,164.6 L33.2,160 Z" fill="#5a5a50"/>
  <path d="M41.1,162 L50.6,157.4 L50.6,160 L41.1,164.6 Z" fill="#6e6e62"/>
  <path d="M42,148.2 L45,152 L43.2,152 L43.2,157 L40.8,157 L40.8,152 L39,152 Z" fill="#d41818"/>
  <!-- rotate -->
  <path d="M37.3,179.5 Q38.5,175.8 42.5,175.6 Q45.5,175.7 46.5,177.8" fill="none" stroke="#e01010" stroke-width="3.2" stroke-linecap="round"/>
  <path d="M47.8,175 L50,181.5 L43.8,179.6 Z" fill="#e01010" stroke="#5a0a0a" stroke-width="0.4"/>
  <path d="M46.7,184 Q45.5,187.8 41.5,188 Q38.5,187.8 37.5,185.8" fill="none" stroke="#e01010" stroke-width="3.2" stroke-linecap="round"/>
  <path d="M33.8,182.2 L36,188.3 L40,184.8 Z" fill="#e01010" stroke="#5a0a0a" stroke-width="0.4"/>
  <!-- follow me -->
  <path d="M50.5,203 Q49,199.8 42,200 Q35.5,200.5 33.5,206 Q32.5,211 35,214.5 L37,216.3 L39.5,214.5 Q37,211 37.8,208 Q39,204.5 43.5,204.3 Q48,204.5 49.5,207.5 L51,206.5 Z" fill="#8e8e84" stroke="#111" stroke-width="1" stroke-linejoin="round"/>
  <path d="M46.5,202.3 Q40,202.3 37.5,206.5 Q36,210 38,213 L43.5,212.3 L43.5,214 L46.8,211 L43.8,208.3 L43.8,210 L40.5,210.3 Q39.5,208 40.8,206.2 Q42.5,204.5 46.5,204.5 Z" fill="#e4180c" stroke="#3a0a06" stroke-width="0.5"/>
  <!-- scale -->
  <rect x="33.5" y="225.3" width="18" height="17" fill="#fff" stroke="#f08a80" stroke-width="0.9"/>
  <rect x="33.5" y="229.5" width="13.8" height="13.2" fill="#a3a390" stroke="#222" stroke-width="0.9"/>
  <path d="M43.0,235.5 L48.9,230.0 L50.4,231.5 L52.0,225.2 L45.6,226.4 L47.0,227.9 L41.0,233.5 Z" fill="#d41010" stroke="#3a0a06" stroke-width="0.6" stroke-linejoin="round"/>
  <!-- offset -->
  <path d="M33.8,256.5 Q40,249.5 47,254 Q51.5,259 48,268" fill="none" stroke="#f02a1a" stroke-width="1.2"/>
  <path d="M35.5,262.5 Q37,257 41.5,256.5 M39,267.5 Q40,262.5 44.5,262" fill="none" stroke="#222" stroke-width="1.2"/>
  <path d="M42.5,262.9 L46.8,258.2 L48.4,259.6 L49.5,253.2 L43.2,254.9 L44.8,256.3 L40.5,261.1 Z" fill="#d41010" stroke="#3a0a06" stroke-width="0.6" stroke-linejoin="round"/>
  <!-- zoom extents -->
  <line x1="40" y1="288.5" x2="34.5" y2="294" stroke="#222" stroke-width="2.2"/>
  <circle cx="42.5" cy="285.8" r="3.9" fill="#98b8d8" stroke="#333" stroke-width="1"/>
  <path d="M40.0,281.9 L36.7,279.1 L38.0,277.6 L33.0,277.0 L34.4,281.8 L35.7,280.3 L39.0,283.1 Z" fill="#d41010" stroke="#3a0a06" stroke-width="0.6" stroke-linejoin="round"/><path d="M46.0,283.1 L49.3,280.3 L50.6,281.8 L52.0,277.0 L47.0,277.6 L48.3,279.1 L45.0,281.9 Z" fill="#d41010" stroke="#3a0a06" stroke-width="0.6" stroke-linejoin="round"/><path d="M45.0,289.6 L48.3,292.4 L47.0,293.9 L52.0,294.5 L50.6,289.7 L49.3,291.2 L46.0,288.4 Z" fill="#d41010" stroke="#3a0a06" stroke-width="0.6" stroke-linejoin="round"/>
  <!-- mirror -->
  <rect x="41.2" y="312" width="2" height="24" fill="#1f78e8"/>
  <path d="M30.5,333.5 L38,316.5 L38,333.5 Z" fill="#8ab060" stroke="#111" stroke-width="1.1" stroke-linejoin="round"/>
  <path d="M46.2,316.5 L46.2,333.5 L54,333.5 Z" fill="#f08a20" stroke="#111" stroke-width="1.1" stroke-linejoin="round"/>
  <!-- slab arrows J V N -->
  <g id="slab">
    <path d="M31,362.5 L50.8,362.5 L38.5,367 Z" fill="#e8d498"/>
    <path d="M31,362.5 L38.5,367 L38.5,372.3 L31,367.5 Z" fill="#7a6e5c" stroke="#3a342a" stroke-width="0.6"/>
    <path d="M38.5,367 L50.8,362.5 L50.8,368 L38.5,372.3 Z" fill="#4e4a40" stroke="#2a2824" stroke-width="0.6"/>
    <path d="M40.6,350 L44.2,359 L41.8,359 L41.8,363.5 L39.5,363.5 L39.5,359 L36.8,359 Z" fill="#dc1a10" stroke="#6a1a10" stroke-width="0.5"/>
  </g>
  <use href="#slab"/>
  <path d="M51.8,350.5 V357 Q51.8,359.8 49,359.8 Q46.8,359.8 46.3,357.5" fill="none" stroke="#1a6ee0" stroke-width="2.4"/>
  <use href="#slab" y="26"/>
  <path d="M45.5,376.5 L49.5,386 L53.5,376.5" fill="none" stroke="#2a5a32" stroke-width="2.4"/>
  <use href="#slab" y="52"/>
  <path d="M45.8,412 V402.5 L52.6,412 V402.5" fill="none" stroke="#000" stroke-width="2.2"/>
  <!-- rotate slabs -->
  <g id="slab2">
    <path d="M31.5,452 L45.5,451.8 L38,455 Z" fill="#e2cc90"/>
    <path d="M31.5,452 L38,455 L38,458.8 L31.5,456 Z" fill="#7a7060" stroke="#3a342a" stroke-width="0.5"/>
    <path d="M38,455 L45.5,451.8 L45.5,455.5 L38,458.8 Z" fill="#55504a" stroke="#2a2824" stroke-width="0.5"/>
    <path d="M38.3,443 L41.6,449 L39.6,449 L39.6,453.5 L37,453.5 L37,449 L35,449 Z" fill="#dc1a10" stroke="#5a1008" stroke-width="0.5"/>
  </g>
  <use href="#slab2"/>
  <path d="M50.5,445.5 Q55.5,437.5 51,436.8 Q47,436.8 43.8,442.8" fill="none" stroke="#111" stroke-width="1.4"/>
  <path d="M41.3,440.5 L42.2,446.8 L47,444.2 Z" fill="#111"/>
  <use href="#slab2" y="26"/>
  <path d="M44.5,471.5 Q40.5,463.5 45,462.8 Q49,462.8 51.6,468.5" fill="none" stroke="#111" stroke-width="1.4"/>
  <path d="M49,470.3 L53.8,472.8 L54.2,467.2 Z" fill="#111"/>
  <!-- sandbox contours -->
  <path d="M33.3,506 L40.5,502.8 L47.5,503.8 L51,514.5 L42.5,519.4 L34.5,516.5 Z" fill="#e87a62" stroke="#333" stroke-width="0.9" stroke-linejoin="round"/>
  <path d="M35,509 Q39,506 42,508.5 Q45,511 49,509 M36,513 Q40,510.5 43,513 Q46,515.5 50,513 M38,505.5 Q42,507 46,505.5 M39.5,516.5 Q42,514.5 45,517" fill="none" stroke="#fbe8e0" stroke-width="1"/>
  <!-- sandbox scratch -->
  <path d="M32.5,533 L46,529.5 L52,541 L38,546 Z" fill="#a3a390" stroke="#222" stroke-width="0.9"/>
  <path d="M36,536 L48.5,532.5 M38,540 L50.5,536.5 M38.5,531.5 L42,544.5 M43,530.5 L46.5,543.5" stroke="#333" stroke-width="0.8"/>
  <path d="M32.5,533 L46,529.5 L52,541 L38,546 Z" fill="none" stroke="#e01818" stroke-width="1"/>
  <circle cx="32.8" cy="533" r="1.4" fill="#e01818"/><circle cx="46" cy="529.5" r="1.4" fill="#e01818"/><circle cx="38" cy="546" r="1.4" fill="#e01818"/>
  <!-- smoove -->
  <path d="M32.5,572.5 L44,563.5 L51.5,572 L41,581 Z" fill="#a4a494" stroke="#333" stroke-width="0.9" stroke-linejoin="round"/>
  <path d="M35.5,570 L47,577.5 M38.5,567.5 L49.5,575 M41.3,565.5 L44.5,579 M37.5,574.5 L47,566" stroke="#555" stroke-width="0.6"/>
  <path d="M42,564 L45,568.3 L43.2,568.3 L43.2,573.7 L45,573.7 L42,578.2 L39,573.7 L40.8,573.7 L40.8,568.3 L39,568.3 Z" fill="#e01818" stroke="#5a0a0a" stroke-width="0.4"/>
  <!-- stamp -->
  <path d="M32.5,599 L42,590 L51.5,598.5 L41.5,605.8 Z" fill="#a4a494" stroke="#333" stroke-width="0.9" stroke-linejoin="round"/>
  <path d="M36,598.5 L42,593 L48,598 L41.8,602.5 Z" fill="#6a6a5e" stroke="#222" stroke-width="0.6"/>
  <circle cx="42" cy="595.8" r="2.8" fill="#f0f0f0" stroke="#222" stroke-width="0.8"/>
  <circle cx="41.5" cy="596.5" r="1.2" fill="#333"/>
  <!-- drape -->
  <path d="M36,626 L35.5,620 Q37,615 42,615 Q47,615 48,619 L50,626 Z" fill="#c8c8c0" stroke="#444" stroke-width="0.8"/>
  <path d="M38.5,617 Q42,613.5 46,617" fill="none" stroke="#555" stroke-width="0.7"/>
 </g>
</svg>

<!-- top toolbar bottom line -->
<div class="a" style="left:0;top:28px;width:907px;height:1px;background:#b9b9b9"></div>
<!-- viewport -->
<div class="a" style="left:56px;top:28px;width:1px;height:598px;background:#b4b4b4"></div><div class="a" style="left:57px;top:28px;width:1px;height:598px;background:#8e8e8e"></div><div class="a" style="left:58px;top:29px;width:1px;height:597px;background:#6a6a6a"></div>
<div class="a" style="left:56px;top:28px;width:851px;height:1px;background:#b4b4b4"></div><div class="a" style="left:57px;top:29px;width:850px;height:1px;background:#8e8e8e"></div><div class="a" style="left:58px;top:30px;width:849px;height:1px;background:#6a6a6a"></div>
<div class="a" style="left:59px;top:31px;width:848px;height:595px;background:#fff"></div>

<svg id="scene" width="907" height="626" style="left:0;top:0">
  <line x1="413.9" y1="31.3" x2="59" y2="239.6" stroke="#8ac68a" stroke-width="1.1"/>
  <line x1="413.9" y1="31.3" x2="59" y2="239.6" stroke="#000" stroke-width="1.25" stroke-dasharray="1.2 1.8 1.2 4.5 1.2 7" opacity="0.85"/>
  <line x1="59" y1="330.2" x2="907" y2="548.4" stroke="#d83a20" stroke-width="1.1"/>
  <line x1="59" y1="330.2" x2="907" y2="548.4" stroke="#f4c4bc" stroke-width="1.2" stroke-dasharray="1.6 4.6" opacity="0.9"/>
  <defs>
    <g id="cube">
      <polygon points="212.2,199.7 267.2,213.7 235.9,231.3 182,217.2" fill="#b0b0b0"/>
      <polygon points="182,217.2 235.9,231.3 232.4,290.2 177.9,276.1" fill="#fff"/>
      <polygon points="235.9,231.3 267.2,213.7 264,272.6 232.4,290.2" fill="#c0c0c0"/>
      <polyline points="182,217.2 235.9,231.3 267.2,213.7" fill="none" stroke="#111" stroke-width="1"/>
      <line x1="235.9" y1="231.3" x2="232.4" y2="290.2" stroke="#111" stroke-width="1"/>
      <polygon points="212.2,199.7 267.2,213.7 264,272.6 232.4,290.2 177.9,276.1 182,217.2" fill="none" stroke="#000" stroke-width="1.8" stroke-linejoin="round"/>
    </g>
  </defs>
  <use href="#cube" x="0" y="0"/>
  <use href="#cube" x="89" y="23"/>
  <use href="#cube" x="178" y="46"/>
  <use href="#cube" x="266.6" y="68.6"/>
  <use href="#cube" x="230" y="-60"/>
  <use href="#cube" x="319.1" y="-36.8"/>
</svg>

<!--PANELS-->
<div class="a" style="left:616px;top:35px;width:279px;height:2px;background:#f0f0f0;"></div>
<div class="a" style="left:616px;top:36px;width:1px;height:590px;background:#f2f2f2;"></div>
<div class="a" style="left:617px;top:37px;width:277px;height:590px;background:#9bb5d2;"></div>
<div class="a" style="left:893px;top:37px;width:1px;height:590px;background:#b9c2cc;"></div>
<div class="a" style="left:894px;top:35px;width:1px;height:591px;background:#5e5e5e;"></div>
<div class="a tx" style="left:621px;top:45px;font-size:11px;font-weight:bold;letter-spacing:0px;color:#000">Ablage 3</div>
<div class="a" style="left:876px;top:43px;width:12px;height:13px;background:#b15a45;"></div>
<svg class="a" style="left:878px;top:46px" width="8" height="7"><path d="M1.3,1.2 L5.9,5.6 M5.9,1.2 L1.3,5.6" stroke="#fff" stroke-width="1.8"/></svg>
<div class="a" style="left:619px;top:63px;width:272px;height:1px;background:#b9b9b9;"></div>
<div class="a" style="left:619px;top:64px;width:272px;height:17px;background:linear-gradient(#f6f6f6,#e8e8e8 30%,#d2d2d2 65%,#b4b4b4);"></div>
<svg class="a" style="left:628px;top:68px" width="7" height="7"><path d="M0,0.5 H6.6 L3.3,6.5 Z" fill="#000"/></svg>
<div class="a tx" style="left:641px;top:65px;font-size:11px;font-weight:normal;letter-spacing:-0.2px;color:#000">Szenen</div>
<div class="a" style="left:874px;top:64px;width:15px;height:15px;background:#f7f7f7;"></div>
<div class="a" style="left:875px;top:65px;width:13px;height:13px;background:#e3e3e3;border:1px solid #9c9c9c;box-sizing:border-box"></div>
<svg class="a" style="left:878px;top:69px" width="8" height="7"><path d="M1.5,1.5 L5.7,5.4 M5.7,1.5 L1.5,5.4" stroke="#000" stroke-width="1.15"/></svg>
<div class="a" style="left:619px;top:81px;width:272px;height:26px;background:#f0f0f0;"></div>
<div class="a" style="left:619px;top:107px;width:272px;height:1px;background:#a0a0a0;"></div>
<div class="a" style="left:619px;top:108px;width:272px;height:68px;background:#ffffff;"></div>
<div class="a" style="left:619px;top:176px;width:272px;height:3px;background:#ececec;"></div>
<div class="a" style="left:619px;top:179px;width:272px;height:1px;background:#a8a8a8;"></div>
<div class="a" style="left:619px;top:180px;width:272px;height:3px;background:#f3f3f3;"></div>
<div class="a" style="left:619px;top:183px;width:272px;height:1px;background:#a8a8a8;"></div>
<div class="a" style="left:619px;top:184px;width:272px;height:2px;background:#f4f4f4;"></div>
<div class="a" style="left:619px;top:185px;width:272px;height:1px;background:#b9b9b9;"></div>
<div class="a" style="left:619px;top:186px;width:272px;height:17px;background:linear-gradient(#f6f6f6,#e8e8e8 30%,#d2d2d2 65%,#b4b4b4);"></div>
<svg class="a" style="left:628px;top:190px" width="7" height="8"><path d="M0.3,0 V7 L6.3,3.5 Z" fill="#000"/></svg>
<div class="a tx" style="left:641px;top:187px;font-size:11px;font-weight:normal;letter-spacing:0.45px;color:#000">Schatten</div>
<div class="a" style="left:874px;top:186px;width:15px;height:15px;background:#f7f7f7;"></div>
<div class="a" style="left:875px;top:187px;width:13px;height:13px;background:#e3e3e3;border:1px solid #9c9c9c;box-sizing:border-box"></div>
<svg class="a" style="left:878px;top:191px" width="8" height="7"><path d="M1.5,1.5 L5.7,5.4 M5.7,1.5 L1.5,5.4" stroke="#000" stroke-width="1.15"/></svg>
<div class="a" style="left:619px;top:203px;width:272px;height:1px;background:#f0f0f0;"></div>
<div class="a" style="left:619px;top:204px;width:272px;height:1px;background:#b9b9b9;"></div>
<div class="a" style="left:619px;top:205px;width:272px;height:17px;background:linear-gradient(#f6f6f6,#e8e8e8 30%,#d2d2d2 65%,#b4b4b4);"></div>
<svg class="a" style="left:628px;top:209px" width="7" height="7"><path d="M0,0.5 H6.6 L3.3,6.5 Z" fill="#000"/></svg>
<div class="a tx" style="left:641px;top:206px;font-size:11px;font-weight:normal;letter-spacing:0.55px;color:#000">Gliederung</div>
<div class="a" style="left:874px;top:205px;width:15px;height:15px;background:#f7f7f7;"></div>
<div class="a" style="left:875px;top:206px;width:13px;height:13px;background:#e3e3e3;border:1px solid #9c9c9c;box-sizing:border-box"></div>
<svg class="a" style="left:878px;top:210px" width="8" height="7"><path d="M1.5,1.5 L5.7,5.4 M5.7,1.5 L1.5,5.4" stroke="#000" stroke-width="1.15"/></svg>
<div class="a" style="left:619px;top:222px;width:272px;height:27px;background:#f0f0f0;"></div>
<div class="a" style="left:619px;top:249px;width:272px;height:1px;background:#a0a0a0;"></div>
<div class="a" style="left:619px;top:250px;width:272px;height:376px;background:#ffffff;"></div>
<div class="a tx" style="left:636px;top:230px;font-size:11px;font-weight:normal;letter-spacing:0.5px;color:#000">Filter:</div>
<div class="a" style="left:667px;top:225px;width:195px;height:20px;background:#fff;border:1px solid #7a7a7a;box-sizing:border-box"></div>
<svg class="a" style="left:620px;top:82px" width="272" height="24"><g transform="translate(-620,-82)"><path d="M627.5,92.5 A6,6 0 0 1 638.2,90.3" fill="none" stroke="#7c7c7a" stroke-width="1.7"/><path d="M640.5,87.8 L640.2,93 L635.3,91.6 Z" fill="#7c7c7a"/><path d="M638.8,95.2 A6,6 0 0 1 628.2,97.2" fill="none" stroke="#7c7c7a" stroke-width="1.7"/><path d="M625.8,99.6 L626.2,94.4 L631,95.9 Z" fill="#7c7c7a"/><circle cx="655.3" cy="93.7" r="6.6" fill="#fafafa" stroke="#111" stroke-width="1.5"/><path d="M651,93.7 H659.6 M655.3,89.4 V98" stroke="#000" stroke-width="2.1"/><circle cx="678.9" cy="93.7" r="6.7" fill="#f6f6f6" stroke="#767674" stroke-width="1.2"/><path d="M674.8,93.7 H683" stroke="#88887c" stroke-width="2"/><path d="M788.4,89 Q785.6,89 785.6,92 V96.5" fill="none" stroke="#7f7f7f" stroke-width="2"/><path d="M783.2,96 H788 L785.6,99.5 Z" fill="#7f7f7f"/><path d="M803.8,98.8 Q806.8,98.8 806.8,96 V91.5" fill="none" stroke="#7f7f7f" stroke-width="2"/><path d="M804.4,92 H809.2 L806.8,88.3 Z" fill="#7f7f7f"/><rect x="823.7" y="89.2" width="4" height="4" fill="#fff" stroke="#111" stroke-width="1.2"/><rect x="823.7" y="97.7" width="4" height="4.4" fill="#fff" stroke="#111" stroke-width="1.2"/><path d="M830.5,89 H836 M830.5,91.3 H836 M830.5,93.5 H833.5" stroke="#333" stroke-width="1"/><path d="M830.5,97.5 H836 M830.5,99.8 H836 M830.5,102 H833.5" stroke="#777" stroke-width="1"/><path d="M838.6,94 H842.8 L840.7,96.7 Z" fill="#000"/><rect x="850.3" y="86.3" width="9.4" height="15.2" fill="#fff" stroke="#bbb" stroke-width="0.6"/><rect x="850" y="93" width="10" height="8.8" fill="#000"/><path d="M851.6,88.2 H858.4 L855,92 Z" fill="#000"/><path d="M852.3,97.7 H857.5 M854.9,95.1 V100.3" stroke="#fff" stroke-width="1.6"/></g></svg>
<svg class="a" style="left:872.1px;top:85.6px" width="16" height="17"><path d="M13.9,8 L5.4,0 V3 H1 V13 H5.4 V16 Z" fill="#000"/><rect x="1.3" y="2" width="6.6" height="8.6" fill="#fff" stroke="#111" stroke-width="0.9"/><rect x="1.8" y="2.5" width="5.6" height="2.8" fill="#3a86d8"/><path d="M2.5,7 H6.8 M2.5,9 H6.8" stroke="#666" stroke-width="0.8"/></svg>
<svg class="a" style="left:872.1px;top:226.7px" width="16" height="17"><path d="M13.9,8 L5.4,0 V3 H1 V13 H5.4 V16 Z" fill="#000"/><rect x="1.3" y="2" width="6.6" height="8.6" fill="#fff" stroke="#111" stroke-width="0.9"/><rect x="1.8" y="2.5" width="5.6" height="2.8" fill="#3a86d8"/><path d="M2.5,7 H6.8 M2.5,9 H6.8" stroke="#666" stroke-width="0.8"/></svg>
<div class="a tx" style="left:665px;top:255px;font-size:11px;font-weight:bold;letter-spacing:0.65px;color:#000">Unbenannt</div>
<svg class="a" style="left:649px;top:255px" width="12" height="12"><rect x="1.3" y="1.5" width="9.6" height="9.5" fill="#fff" stroke="#777" stroke-width="1"/><path d="M1.3,1.5 h0.1 M10.9,1.5 h0.1 M1.3,11 h0.1 M10.9,11 h0.1" stroke="#222" stroke-width="1.4"/><path d="M3.5,6 Q6,2 8.7,6" fill="none" stroke="#333" stroke-width="1.1"/><path d="M4.5,5 V9 M7.7,5 V9" stroke="#888" stroke-width="1"/><rect x="5.3" y="6.8" width="1.6" height="2" fill="#2a4a3a"/><rect x="4.3" y="9" width="3.6" height="1.3" fill="#222"/></svg>
<svg class="a" style="left:630px;top:274px" width="15" height="12"><path d="M1,5.2 Q7.2,-3 13.6,5.2 Q7.2,13.2 1,5.2 Z" fill="#fff" stroke="#000" stroke-width="1.2"/><circle cx="7.1" cy="4.4" r="2.7" fill="#000"/><circle cx="6.6" cy="3.1" r="0.7" fill="#ddd"/></svg>
<svg class="a" style="left:662px;top:274px" width="10" height="10"><rect x="0" y="0.5" width="4" height="3.8" fill="#000"/><rect x="5" y="0.5" width="4" height="3.8" fill="#000"/><rect x="0" y="5" width="4" height="3.8" fill="#000"/><rect x="5" y="5" width="4" height="3.8" fill="#000"/></svg>
<div class="a tx" style="left:677px;top:273px;font-size:11px;font-weight:normal;letter-spacing:0.6px;color:#000">&lt;A&gt;</div>
<svg class="a" style="left:630px;top:292px" width="15" height="12"><path d="M1,5.2 Q7.2,-3 13.6,5.2 Q7.2,13.2 1,5.2 Z" fill="#fff" stroke="#000" stroke-width="1.2"/><circle cx="7.1" cy="4.4" r="2.7" fill="#000"/><circle cx="6.6" cy="3.1" r="0.7" fill="#ddd"/></svg>
<svg class="a" style="left:662px;top:292px" width="10" height="10"><rect x="0" y="0.5" width="4" height="3.8" fill="#000"/><rect x="5" y="0.5" width="4" height="3.8" fill="#000"/><rect x="0" y="5" width="4" height="3.8" fill="#000"/><rect x="5" y="5" width="4" height="3.8" fill="#000"/></svg>
<div class="a tx" style="left:677px;top:291px;font-size:11px;font-weight:normal;letter-spacing:0.6px;color:#000">&lt;A&gt;</div>
<svg class="a" style="left:630px;top:310px" width="15" height="12"><path d="M1,5.2 Q7.2,-3 13.6,5.2 Q7.2,13.2 1,5.2 Z" fill="#fff" stroke="#000" stroke-width="1.2"/><circle cx="7.1" cy="4.4" r="2.7" fill="#000"/><circle cx="6.6" cy="3.1" r="0.7" fill="#ddd"/></svg>
<svg class="a" style="left:662px;top:310px" width="10" height="10"><rect x="0" y="0.5" width="4" height="3.8" fill="#000"/><rect x="5" y="0.5" width="4" height="3.8" fill="#000"/><rect x="0" y="5" width="4" height="3.8" fill="#000"/><rect x="5" y="5" width="4" height="3.8" fill="#000"/></svg>
<div class="a tx" style="left:677px;top:309px;font-size:11px;font-weight:normal;letter-spacing:0.6px;color:#000">&lt;A&gt;</div>
<svg class="a" style="left:630px;top:328px" width="15" height="12"><path d="M1,5.2 Q7.2,-3 13.6,5.2 Q7.2,13.2 1,5.2 Z" fill="#fff" stroke="#000" stroke-width="1.2"/><circle cx="7.1" cy="4.4" r="2.7" fill="#000"/><circle cx="6.6" cy="3.1" r="0.7" fill="#ddd"/></svg>
<svg class="a" style="left:662px;top:328px" width="10" height="10"><rect x="0" y="0.5" width="4" height="3.8" fill="#000"/><rect x="5" y="0.5" width="4" height="3.8" fill="#000"/><rect x="0" y="5" width="4" height="3.8" fill="#000"/><rect x="5" y="5" width="4" height="3.8" fill="#000"/></svg>
<div class="a tx" style="left:677px;top:327px;font-size:11px;font-weight:normal;letter-spacing:0.6px;color:#000">&lt;A&gt;</div>
<svg class="a" style="left:630px;top:346px" width="15" height="12"><path d="M1,5.2 Q7.2,-3 13.6,5.2 Q7.2,13.2 1,5.2 Z" fill="#fff" stroke="#000" stroke-width="1.2"/><circle cx="7.1" cy="4.4" r="2.7" fill="#000"/><circle cx="6.6" cy="3.1" r="0.7" fill="#ddd"/></svg>
<svg class="a" style="left:662px;top:346px" width="10" height="10"><rect x="0" y="0.5" width="4" height="3.8" fill="#000"/><rect x="5" y="0.5" width="4" height="3.8" fill="#000"/><rect x="0" y="5" width="4" height="3.8" fill="#000"/><rect x="5" y="5" width="4" height="3.8" fill="#000"/></svg>
<div class="a tx" style="left:677px;top:345px;font-size:11px;font-weight:normal;letter-spacing:0.6px;color:#000">&lt;A&gt;</div>
<svg class="a" style="left:630px;top:364px" width="15" height="12"><path d="M1,5.2 Q7.2,-3 13.6,5.2 Q7.2,13.2 1,5.2 Z" fill="#fff" stroke="#000" stroke-width="1.2"/><circle cx="7.1" cy="4.4" r="2.7" fill="#000"/><circle cx="6.6" cy="3.1" r="0.7" fill="#ddd"/></svg>
<svg class="a" style="left:662px;top:364px" width="10" height="10"><rect x="0" y="0.5" width="4" height="3.8" fill="#000"/><rect x="5" y="0.5" width="4" height="3.8" fill="#000"/><rect x="0" y="5" width="4" height="3.8" fill="#000"/><rect x="5" y="5" width="4" height="3.8" fill="#000"/></svg>
<div class="a tx" style="left:677px;top:363px;font-size:11px;font-weight:normal;letter-spacing:0.6px;color:#000">&lt;A&gt;</div>
<div class="a" style="left:282px;top:363px;width:279px;height:2px;background:#f0f0f0;"></div>
<div class="a" style="left:282px;top:364px;width:1px;height:262px;background:#f2f2f2;"></div>
<div class="a" style="left:283px;top:365px;width:277px;height:262px;background:#9bb5d2;"></div>
<div class="a" style="left:559px;top:365px;width:1px;height:262px;background:#b9c2cc;"></div>
<div class="a" style="left:560px;top:363px;width:1px;height:263px;background:#5e5e5e;"></div>
<div class="a tx" style="left:287px;top:373px;font-size:11px;font-weight:bold;letter-spacing:0px;color:#000">Ablage 1</div>
<div class="a" style="left:542px;top:371px;width:12px;height:13px;background:#b15a45;"></div>
<svg class="a" style="left:544px;top:374px" width="8" height="7"><path d="M1.3,1.2 L5.9,5.6 M5.9,1.2 L1.3,5.6" stroke="#fff" stroke-width="1.8"/></svg>
<div class="a" style="left:285px;top:391px;width:272px;height:1px;background:#b9b9b9;"></div>
<div class="a" style="left:285px;top:392px;width:272px;height:17px;background:linear-gradient(#f6f6f6,#e8e8e8 30%,#d2d2d2 65%,#b4b4b4);"></div>
<svg class="a" style="left:294px;top:396px" width="7" height="7"><path d="M0,0.5 H6.6 L3.3,6.5 Z" fill="#000"/></svg>
<div class="a tx" style="left:307px;top:393px;font-size:11px;font-weight:normal;letter-spacing:0.62px;color:#000">Elementinformationen</div>
<div class="a" style="left:540px;top:392px;width:15px;height:15px;background:#f7f7f7;"></div>
<div class="a" style="left:541px;top:393px;width:13px;height:13px;background:#e3e3e3;border:1px solid #9c9c9c;box-sizing:border-box"></div>
<svg class="a" style="left:544px;top:397px" width="8" height="7"><path d="M1.5,1.5 L5.7,5.4 M5.7,1.5 L1.5,5.4" stroke="#000" stroke-width="1.15"/></svg>
<div class="a" style="left:285px;top:409px;width:272px;height:179px;background:#f0f0f0;"></div>
<div class="a tx" style="left:294px;top:417px;font-size:11px;font-weight:bold;letter-spacing:0.35px;color:#000">Keine Auswahl</div>
<div class="a" style="left:289px;top:436px;width:267px;height:1px;background:#a0a0a0;"></div>
<div class="a" style="left:285px;top:588px;width:272px;height:1px;background:#b9b9b9;"></div>
<div class="a" style="left:285px;top:589px;width:272px;height:17px;background:linear-gradient(#f6f6f6,#e8e8e8 30%,#d2d2d2 65%,#b4b4b4);"></div>
<svg class="a" style="left:294px;top:593px" width="7" height="7"><path d="M0,0.5 H6.6 L3.3,6.5 Z" fill="#000"/></svg>
<div class="a tx" style="left:307px;top:590px;font-size:11px;font-weight:normal;letter-spacing:-0.1px;color:#000">Tags</div>
<div class="a" style="left:540px;top:589px;width:15px;height:15px;background:#f7f7f7;"></div>
<div class="a" style="left:541px;top:590px;width:13px;height:13px;background:#e3e3e3;border:1px solid #9c9c9c;box-sizing:border-box"></div>
<svg class="a" style="left:544px;top:594px" width="8" height="7"><path d="M1.5,1.5 L5.7,5.4 M5.7,1.5 L1.5,5.4" stroke="#000" stroke-width="1.15"/></svg>
<div class="a" style="left:285px;top:606px;width:272px;height:20px;background:#f0f0f0;"></div>
<div class="a" style="left:339px;top:609px;width:190px;height:20px;background:#fff;border:1px solid #7a7a7a;box-sizing:border-box"></div>
<svg class="a" style="left:288px;top:606px" width="50" height="20"><g transform="translate(-288,-606)"><circle cx="299" cy="618.6" r="6.2" fill="none" stroke="#555" stroke-width="1.1"/><path d="M295,618.6 H303 M299,614.6 V622.6" stroke="#7a7a72" stroke-width="1.5"/><path d="M314.8,624.2 V612.8 H320.8 L322.2,614.6 H329.3 V619.5" fill="none" stroke="#333" stroke-width="1.4"/><path d="M314.8,624.2 H323" stroke="#333" stroke-width="1.4"/><circle cx="327.4" cy="623.3" r="4" fill="#f0f0f0" stroke="#333" stroke-width="1.1"/><path d="M325.2,623.3 H329.6 M327.4,621.1 V625.5" stroke="#222" stroke-width="1.2"/></g></svg>
<svg class="a" style="left:537.7px;top:610.7px" width="16" height="17"><path d="M13.9,8 L5.4,0 V3 H1 V13 H5.4 V16 Z" fill="#000"/><rect x="1.3" y="2" width="6.6" height="8.6" fill="#fff" stroke="#111" stroke-width="0.9"/><rect x="1.8" y="2.5" width="5.6" height="2.8" fill="#3a86d8"/><path d="M2.5,7 H6.8 M2.5,9 H6.8" stroke="#666" stroke-width="0.8"/></svg>
<div class="a tx" style="left:344px;top:613px;font-size:11px;font-weight:normal;letter-spacing:-0.15px;color:#444">Suchen</div>
</body></html>
